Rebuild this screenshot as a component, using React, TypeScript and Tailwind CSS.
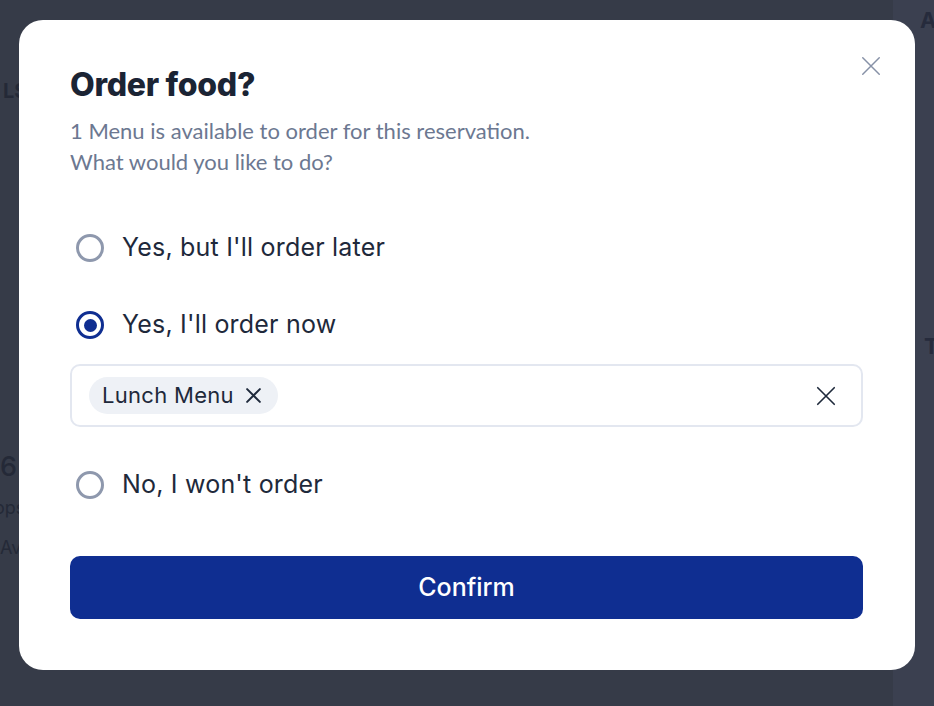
import React from "react";

function Radio({ checked }: { checked?: boolean }) {
  return (
    <span className="flex h-10 w-10 shrink-0 items-center justify-center">
      {checked ? (
        <span className="flex h-[28px] w-[28px] items-center justify-center rounded-full border-[3px] border-[#0f2e91]">
          <span className="h-[13px] w-[13px] rounded-full bg-[#0f2e91]" />
        </span>
      ) : (
        <span className="h-[28px] w-[28px] rounded-full border-[3px] border-[#8e98ad]" />
      )}
    </span>
  );
}

function XIcon({ size, stroke, color }: { size: number; stroke: number; color: string }) {
  return (
    <svg width={size} height={size} viewBox="0 0 24 24" fill="none" stroke={color} strokeWidth={stroke} strokeLinecap="round">
      <path d="M3 3L21 21M21 3L3 21" />
    </svg>
  );
}

export default function App() {
  return (
    <div className="relative h-[706px] w-[934px] overflow-hidden bg-[#363b48]" style={{ fontFamily: "Inter, 'Noto Sans', sans-serif" }}>
      {/* background page */}
      <div className="flex h-full w-full">
        <div className="flex flex-1 flex-col pl-0 pt-[78px] text-[#242937]">
          <div className="ml-[3px] text-[20px] font-bold leading-[26px]">LS</div>
          <div className="mt-[346px] text-[27px] font-medium leading-[34px]">6</div>
          <div className="-ml-[6px] mt-[12px] text-[18px] leading-[24px]">ops</div>
          <div className="mt-[16px] text-[18px] leading-[24px]">Ava</div>
        </div>
        <div className="flex w-[41px] flex-col bg-[#3b4050] pl-[27px] pt-[6px] text-[#262b3c]">
          <div className="text-[22px] font-bold leading-[28px]">A</div>
          <div className="mt-[298px] pl-[4px] text-[22px] font-bold leading-[28px]">T</div>
        </div>
      </div>

      {/* modal */}
      <div className="absolute left-[19px] top-[20px] flex h-[650px] w-[896px] flex-col rounded-[24px] bg-white pl-[51px] pr-[52px] pt-[47px]">
        <button className="absolute right-[32px] top-[34px] flex h-[24px] w-[24px] items-center justify-center">
          <XIcon size={22} stroke={1.6} color="#8791a7" />
        </button>
        <h2 className="text-[32px] font-extrabold leading-[36px] tracking-[-0.3px] text-[#1b2434]">Order food?</h2>
        <p className="mt-[12px] text-[22px] leading-[31px] text-[#6c7891]" style={{ fontFamily: "Lato, sans-serif" }}>
          1 Menu is available to order for this reservation.
          <br />
          What would you like to do?
        </p>

        <div className="mt-[51px] flex h-10 items-center gap-[12px]">
          <Radio />
          <span className="text-[25px] tracking-[0.2px] text-[#1e293b]">Yes, but I'll order later</span>
        </div>
        <div className="mt-[37px] flex h-10 items-center gap-[12px]">
          <Radio checked />
          <span className="text-[25px] tracking-[0.2px] text-[#1e293b]">Yes, I'll order now</span>
        </div>
        <div className="mt-[19px] flex h-[63px] items-center justify-between rounded-[10px] border-2 border-[#e3e7f0] pl-[17px] pr-[24px]">
          <span className="flex h-[37px] items-center gap-[11px] rounded-full bg-[#eef1f6] pl-[13px] pr-[16px]">
            <span className="text-[22px] tracking-[0.3px] text-[#1e293b]">Lunch Menu</span>
            <XIcon size={17} stroke={2.8} color="#1e293b" />
          </span>
          <XIcon size={22} stroke={1.8} color="#1e293b" />
        </div>
        <div className="mt-[38px] flex h-10 items-center gap-[12px]">
          <Radio />
          <span className="text-[25px] tracking-[0.2px] text-[#1e293b]">No, I won't order</span>
        </div>
        <button className="mt-[51px] flex h-[63px] w-full items-center justify-center rounded-[10px] bg-[#0f2e91] text-[25px] font-medium text-white">
          Confirm
        </button>
      </div>
    </div>
  );
}
